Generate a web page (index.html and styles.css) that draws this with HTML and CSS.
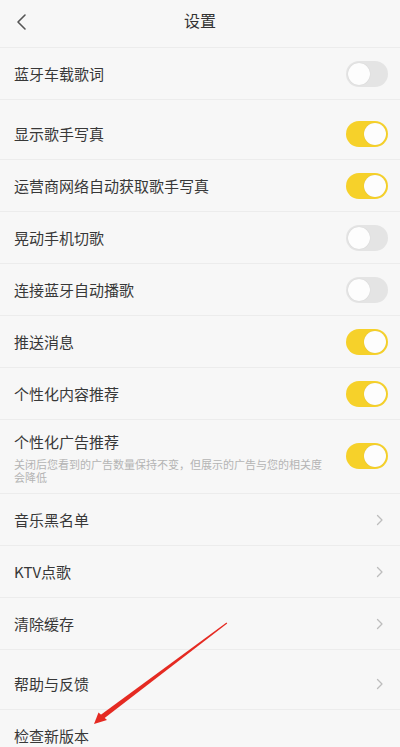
FILE: index.html
```html
<!DOCTYPE html>
<html lang="zh">
<head>
<meta charset="utf-8">
<title>设置</title>
<link rel="stylesheet" href="styles.css">
</head>
<body>
<div class="page">
  <header class="topbar">
    <svg class="back" width="12" height="18" viewBox="0 0 12 18"><path d="M10 2 L3 9 L10 16" fill="none" stroke="#555" stroke-width="1.6" stroke-linecap="round" stroke-linejoin="round"/></svg>
    <div class="title">设置</div>
  </header>

  <section class="group">
    <div class="row"><span class="label">蓝牙车载歌词</span><span class="switch"></span></div>
  </section>

  <section class="group gap">
    <div class="row"><span class="label">显示歌手写真</span><span class="switch on"></span></div>
    <div class="row"><span class="label">运营商网络自动获取歌手写真</span><span class="switch on"></span></div>
    <div class="row"><span class="label">晃动手机切歌</span><span class="switch"></span></div>
    <div class="row"><span class="label">连接蓝牙自动播歌</span><span class="switch"></span></div>
    <div class="row"><span class="label">推送消息</span><span class="switch on"></span></div>
    <div class="row"><span class="label">个性化内容推荐</span><span class="switch on"></span></div>
    <div class="row tall">
      <div class="textcol">
        <span class="label">个性化广告推荐</span>
        <span class="desc">关闭后您看到的广告数量保持不变，但展示的广告与您的相关度会降低</span>
      </div>
      <span class="switch on"></span>
    </div>
    <div class="row"><span class="label">音乐黑名单</span><svg class="chev" width="8" height="12" viewBox="0 0 8 12"><path d="M1.5 1.5 L6 6 L1.5 10.5" fill="none" stroke="#bdbdbd" stroke-width="1.3" stroke-linecap="round" stroke-linejoin="round"/></svg></div>
    <div class="row"><span class="label">KTV点歌</span><svg class="chev" width="8" height="12" viewBox="0 0 8 12"><path d="M1.5 1.5 L6 6 L1.5 10.5" fill="none" stroke="#bdbdbd" stroke-width="1.3" stroke-linecap="round" stroke-linejoin="round"/></svg></div>
    <div class="row"><span class="label">清除缓存</span><svg class="chev" width="8" height="12" viewBox="0 0 8 12"><path d="M1.5 1.5 L6 6 L1.5 10.5" fill="none" stroke="#bdbdbd" stroke-width="1.3" stroke-linecap="round" stroke-linejoin="round"/></svg></div>
  </section>

  <section class="group gap">
    <div class="row"><span class="label">帮助与反馈</span><svg class="chev" width="8" height="12" viewBox="0 0 8 12"><path d="M1.5 1.5 L6 6 L1.5 10.5" fill="none" stroke="#bdbdbd" stroke-width="1.3" stroke-linecap="round" stroke-linejoin="round"/></svg></div>
    <div class="row"><span class="label">检查新版本</span></div>
  </section>

  <svg class="annot" width="400" height="747" viewBox="0 0 400 747">
    <polygon points="226.5,622.5 227.2,623.6 104,718.5 100.5,715" fill="#e52a22"/>
    <polygon points="94,724 98.5,712.5 107,720" fill="#e52a22"/>
  </svg>
</div>
</body>
</html>
```

FILE: styles.css
```css
html, body {
  margin: 0;
  padding: 0;
  background: #f7f7f7;
}
body {
  font-family: "Noto Sans CJK SC", "Noto Sans", sans-serif;
  color: #383838;
  overflow: hidden;
}
.page {
  position: relative;
  width: 400px;
  height: 747px;
  overflow: hidden;
}
.topbar {
  height: 48px;
  box-sizing: border-box;
  border-bottom: 1px solid #ececec;
  display: flex;
  align-items: flex-start;
  position: relative;
}
.back {
  margin: 13px 0 0 15px;
}
.title {
  position: absolute;
  left: 0;
  right: 0;
  top: 0;
  line-height: 40px;
  text-align: center;
  font-size: 16px;
  color: #333;
}
.group.gap {
  margin-top: 8px;
}
.row {
  height: 52px;
  box-sizing: border-box;
  border-bottom: 1px solid #ececec;
  display: flex;
  align-items: center;
  justify-content: space-between;
  padding: 0 12px 0 14px;
}
.row.tall {
  height: 74px;
  align-items: flex-start;
  padding-top: 12px;
}
.label {
  font-size: 15px;
  line-height: 20px;
  color: #383838;
}
.textcol {
  display: flex;
  flex-direction: column;
}
.desc {
  margin-top: 6px;
  font-size: 11px;
  line-height: 12.5px;
  color: #b4b4b4;
  max-width: 313px;
}
.switch {
  width: 42px;
  height: 26px;
  border-radius: 13px;
  background: #e4e4e4;
  position: relative;
  flex: none;
}
.switch::after {
  content: "";
  position: absolute;
  top: 2px;
  left: 2px;
  width: 22px;
  height: 22px;
  border-radius: 50%;
  background: #fdfdfd;
  box-shadow: 0 0 1px rgba(0,0,0,0.15);
}
.switch.on {
  background: #f6d12a;
}
.switch.on::after {
  left: 18px;
}
.row.tall .switch {
  margin-top: 11px;
}
.chev {
  margin-right: 4px;
}
.annot {
  position: absolute;
  left: 0;
  top: 0;
  pointer-events: none;
}
```
